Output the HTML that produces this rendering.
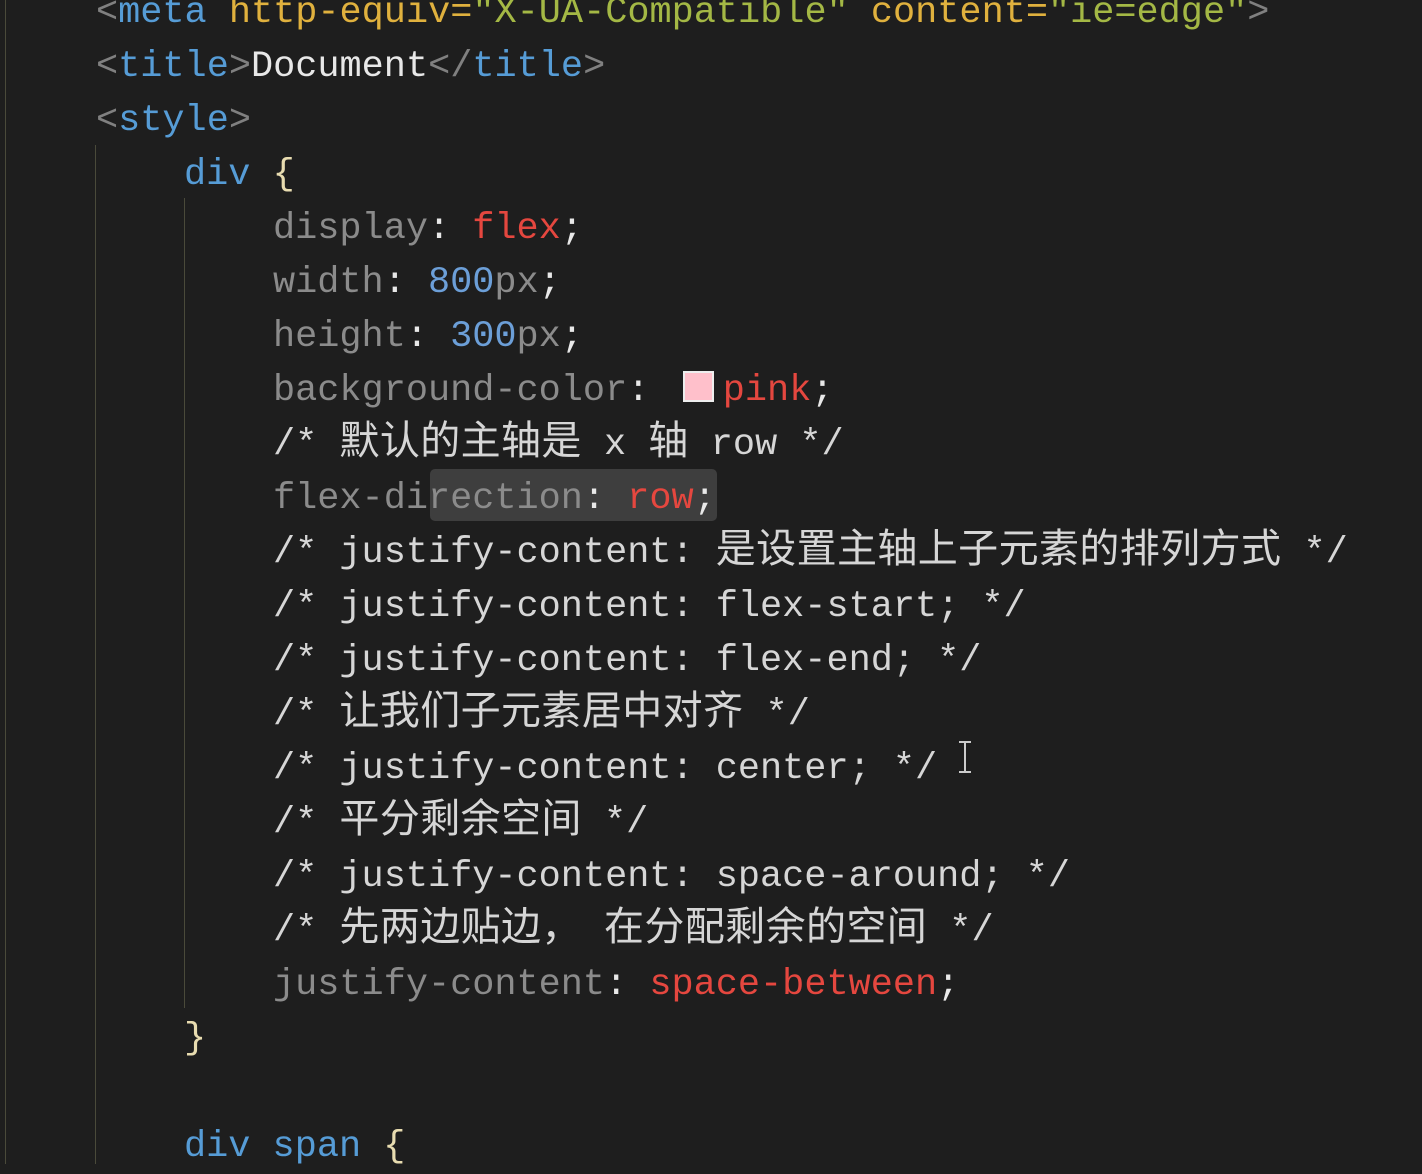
<!DOCTYPE html>
<html><head><meta charset="utf-8"><style>
html,body{margin:0;padding:0;background:#1e1e1e;width:1422px;height:1164px;overflow:hidden}
.l{position:absolute;white-space:pre;font-family:"Liberation Mono","Noto Sans CJK SC",monospace;font-size:36.9px;line-height:54px;height:54px;color:#d4d4d4}
.c{font-family:"Noto Sans CJK SC",sans-serif;font-size:40px;letter-spacing:0.4px;line-height:0}
.t{color:#569cd6}.b{color:#808080}.a{color:#e0b13e}.s{color:#a4b845}
.p{color:#8b8b8b}.v{color:#e5473f}.n{color:#6c9fd8}.cm{color:#d6d6d6}.w{color:#e8e8e8}.br{color:#e8dcb0}
.g{position:absolute;width:1px;background:#4a4a3a}
</style></head><body>
<div class="g" style="left:5px;top:0;height:1164px"></div>
<div class="g" style="left:95px;top:145px;height:1019px"></div>
<div class="g" style="left:184px;top:198px;height:810px"></div>
<div style="position:absolute;left:430px;top:469px;width:287px;height:52px;background:#3e3e3e;border-radius:5px"></div>
<div style="position:absolute;left:683px;top:371px;width:31px;height:31px;background:#ffc0cb;border:2px solid #eee;box-sizing:border-box"></div>
<div style="position:absolute;left:964px;top:742px;width:2px;height:30px;background:#ccc"></div>
<div style="position:absolute;left:959px;top:741px;width:12px;height:2px;background:#ccc"></div>
<div style="position:absolute;left:959px;top:771px;width:12px;height:2px;background:#ccc"></div>

<div class="l" style="left:96px;top:-14px"><span class="b">&lt;</span><span class="t">meta</span> <span class="a">http-equiv=</span><span class="s">"X-UA-Compatible"</span> <span class="a">content=</span><span class="s">"ie=edge"</span><span class="b">&gt;</span></div>
<div class="l" style="left:96px;top:40px"><span class="b">&lt;</span><span class="t">title</span><span class="b">&gt;</span><span class="w">Document</span><span class="b">&lt;/</span><span class="t">title</span><span class="b">&gt;</span></div>
<div class="l" style="left:96px;top:94px"><span class="b">&lt;</span><span class="t">style</span><span class="b">&gt;</span></div>
<div class="l" style="left:184px;top:148px"><span class="t">div</span> <span class="br">{</span></div>
<div class="l" style="left:273px;top:202px"><span class="p">display</span><span class="w">: </span><span class="v">flex</span><span class="w">;</span></div>
<div class="l" style="left:273px;top:256px"><span class="p">width</span><span class="w">: </span><span class="n">800</span><span class="p">px</span><span class="w">;</span></div>
<div class="l" style="left:273px;top:310px"><span class="p">height</span><span class="w">: </span><span class="n">300</span><span class="p">px</span><span class="w">;</span></div>
<div class="l" style="left:273px;top:364px"><span class="p">background-color</span><span class="w">: </span>  <span class="v" style="margin-left:7px">pink</span><span class="w">;</span></div>
<div class="l cm" style="left:273px;top:418px">/* <span class="c">默认的主轴是</span> x <span class="c">轴</span> row */</div>
<div class="l" style="left:273px;top:472px"><span class="p">flex-direction</span><span class="w">: </span><span class="v">row</span><span class="w">;</span></div>
<div class="l cm" style="left:273px;top:526px">/* justify-content: <span class="c">是设置主轴上子元素的排列方式</span> */</div>
<div class="l cm" style="left:273px;top:580px">/* justify-content: flex-start; */</div>
<div class="l cm" style="left:273px;top:634px">/* justify-content: flex-end; */</div>
<div class="l cm" style="left:273px;top:688px">/* <span class="c">让我们子元素居中对齐</span> */</div>
<div class="l cm" style="left:273px;top:742px">/* justify-content: center; */</div>
<div class="l cm" style="left:273px;top:796px">/* <span class="c">平分剩余空间</span> */</div>
<div class="l cm" style="left:273px;top:850px">/* justify-content: space-around; */</div>
<div class="l cm" style="left:273px;top:904px">/* <span class="c">先两边贴边，</span> <span class="c">在分配剩余的空间</span> */</div>
<div class="l" style="left:273px;top:958px"><span class="p">justify-content</span><span class="w">: </span><span class="v">space-between</span><span class="w">;</span></div>
<div class="l" style="left:184px;top:1012px"><span class="br">}</span></div>
<div class="l" style="left:184px;top:1120px"><span class="t">div span</span> <span class="br">{</span></div>
</body></html>
